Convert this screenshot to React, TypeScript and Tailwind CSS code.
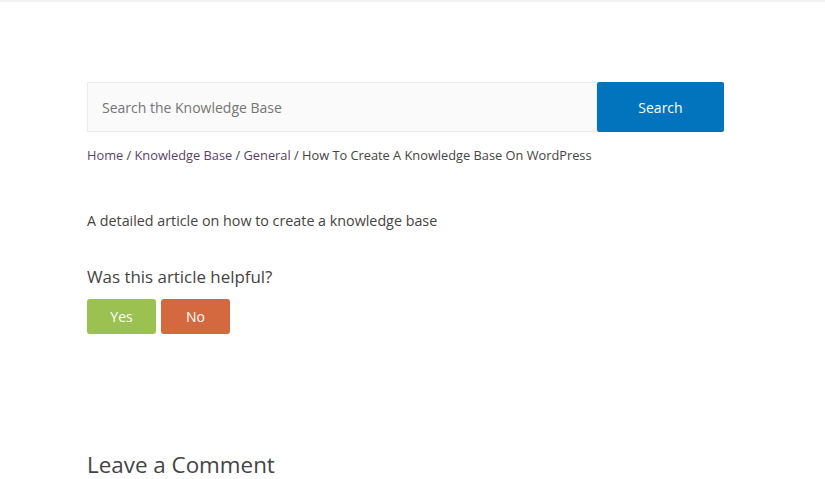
export default function App() {
  return (
    <div className="min-h-[479px] bg-white font-['Open_Sans',sans-serif] text-[#444]">
      <div className="h-[2px] bg-[#f1f1f1]" />

      <main className="ml-[87px] w-[637px] pt-[80px]">
        {/* Search */}
        <form className="flex h-[50px]" onSubmit={(e) => e.preventDefault()}>
          <input
            type="text"
            placeholder="Search the Knowledge Base"
            className="flex-1 border border-[#ececec] bg-[#fafafa] px-[14px] text-[14px] text-[#666] placeholder:text-[#757575] outline-none"
          />
          <button className="w-[127px] rounded-[2px] bg-[#0274be] text-[14px] text-white">
            Search
          </button>
        </form>

        {/* Breadcrumb */}
        <nav className="mt-[13px] text-[12.8px] leading-[20px] text-[#444]">
          <a className="text-[#5a3f6c]">Home</a> /{' '}
          <a className="text-[#5a3f6c]">Knowledge Base</a> /{' '}
          <a className="text-[#5a3f6c]">General</a> / How To Create A Knowledge Base On WordPress
        </nav>

        <p className="mt-[46px] text-[14.3px] leading-[20px]">
          A detailed article on how to create a knowledge base
        </p>

        {/* Helpful */}
        <h3 className="mt-[33px] text-[16.9px] leading-[26px]">Was this article helpful?</h3>
        <div className="mt-[9px] flex gap-[5px]">
          <button className="h-[35px] w-[69px] rounded-[3px] bg-[#9bc151] text-[14px] text-white">Yes</button>
          <button className="h-[35px] w-[69px] rounded-[3px] bg-[#d4693f] text-[14px] text-white">No</button>
        </div>

        <h2 className="mt-[115px] text-[22.4px] leading-[32px]">Leave a Comment</h2>
      </main>
    </div>
  )
}
